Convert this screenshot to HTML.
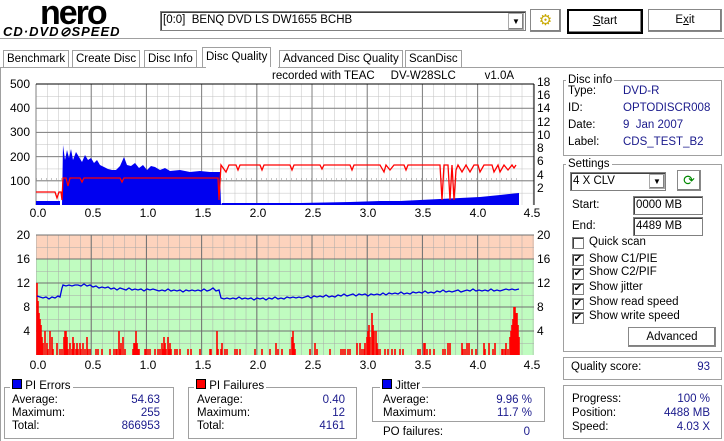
<!DOCTYPE html>
<html><head><meta charset="utf-8"><style>
body{margin:0;width:724px;height:441px;background:#fff;position:relative;overflow:hidden;font-family:"Liberation Sans","IPAGothic",sans-serif;font-size:11.5px;color:#000}
div,span{position:absolute;white-space:nowrap}
.box{border:1px solid #a0a0a0;box-shadow:1px 1px 0 #fff inset,1px 1px 0 #fff}
.lg{background:#fff;padding:0 2px;line-height:12px}
.v{color:#1a1a8c}
.r{text-align:right}
.btn{border:1px solid #000;background:#fff;box-shadow:inset -1px -1px 0 #808080,inset 1px 1px 0 #fff;text-align:center}
.cb{width:10px;height:10px;border:1px solid #808080;box-shadow:inset 1px 1px 0 #404040;background:#fff;font-size:10px;line-height:10px;text-align:center}
.tab{border:1px solid #a0a0a0;border-bottom:none;top:50px;height:17px;line-height:17px;padding:0 3px;background:#fff}
.inp{border:1px solid #808080;box-shadow:inset 1px 1px 0 #404040;background:#fff;line-height:17px;padding-left:2px}
</style></head><body>
<div style="left:40px;top:-6px;font:bold 34px 'Liberation Sans',sans-serif;letter-spacing:-2px">nero</div>
<div style="left:3px;top:24px;font:bold italic 13px 'Liberation Sans',sans-serif;letter-spacing:1px">CD·DVD<span style="position:static">⊘</span>SPEED</div>
<div class="inp" style="left:160px;top:11px;width:362px;height:18px">[0:0]&nbsp; BENQ DVD LS DW1655 BCHB</div>
<div class="btn" style="left:508px;top:13px;width:14px;height:15px;border-color:#aaa;font-size:8px;line-height:15px">▼</div>
<div class="btn" style="left:530px;top:9px;width:29px;height:21px;border-color:#888;color:#c8a800;font-size:15px;line-height:21px">⚙</div>
<div class="btn" style="left:567px;top:9px;width:72px;height:21px;border-width:2px;line-height:21px"><u>S</u>tart</div>
<div class="btn" style="left:648px;top:9px;width:72px;height:21px;border-color:#888;line-height:21px">E<u>x</u>it</div>
<div style="left:0;top:38px;width:724px;height:1px;background:#a0a0a0"></div>
<div class="tab" style="left:3px">Benchmark</div>
<div class="tab" style="left:72px">Create Disc</div>
<div class="tab" style="left:144px">Disc Info</div>
<div class="tab" style="left:202px;top:47px;height:20px;line-height:18px">Disc Quality</div>
<div class="tab" style="left:279px">Advanced Disc Quality</div>
<div class="tab" style="left:405px">ScanDisc</div>
<div style="left:0;top:67px;width:724px;height:1px;background:#a0a0a0"></div>
<div style="left:206px;top:67px;width:72px;height:1px;background:#fff"></div>
<div style="left:0;top:67px;width:1px;height:374px;background:#a0a0a0"></div>
<div style="left:272px;top:70px">recorded with TEAC&nbsp;&nbsp;&nbsp;&nbsp; DV-W28SLC&nbsp;&nbsp;&nbsp;&nbsp;&nbsp;&nbsp;&nbsp;&nbsp; v1.0A</div>

<svg style="position:absolute;left:0;top:0" width="724" height="441" font-family="Liberation Sans,sans-serif" font-size="12">
<defs>
<pattern id="g1" x="36" y="84" width="11.04" height="12.1" patternUnits="userSpaceOnUse"><path d="M0,0V12.1M0,0H11.04" stroke="#c0c0c0" stroke-width="1" fill="none"/></pattern>
<pattern id="g2" x="36" y="235" width="11.04" height="12" patternUnits="userSpaceOnUse"><path d="M0,0V12M0,0H11.04" stroke="#a8a8a8" stroke-width="1" fill="none"/></pattern>
</defs>
<rect x="36" y="84" width="498" height="121" fill="#fff"/>
<rect x="36" y="84" width="498" height="121" fill="url(#g1)"/>
<g stroke="#808080"><path d="M36,84V205M91.2,84V205M146.4,84V205M201.6,84V205M256.8,84V205M312,84V205M367.2,84V205M422.4,84V205M477.6,84V205M36,108.2H534M36,132.4H534M36,156.6H534M36,180.8H534"/></g>
<path d="M36,84H534M534,84V205" stroke="#000" fill="none"/>
<path d="M36,179H520" stroke="#888" stroke-dasharray="1,4"/>
<path fill="#0000f0" d="M36,205V201H60V205H62L63,145L65,160L67,150L69,158L71,149L73,160L76,152L79,157L82,162L85,155L88,160L91,158L94,163L97,160L100,165L104,167L108,169L112,170L116,170L120,166L124,157L127,165L131,166L135,163L139,168L143,165L147,170L151,166L155,167L160,170L165,168L170,171L180,170L190,172L200,171L210,172L220,172L221,205L222,203L300,203L350,202L380,201L400,201L420,200L440,199L460,198L480,197L500,195L519,193V205Z"/>
<path fill="none" stroke="#f00" stroke-width="1.3" d="M36,192H55L57,198L59,192H61L62,200L63,178L66,178L68,186L70,178L80,178L82,182L84,178L120,178L122,182L124,178L218,178L219,200L221,165L226,172L229,165L236,165L238,170L240,165L260,165L262,170L264,165L290,165L292,170L294,165L320,165L322,169L324,165L350,165L352,170L354,165L380,165L384,172L386,165L390,170L394,165L404,165L406,170L408,165L440,165L442,200L444,165L448,165L450,200L452,165L454,200L456,170L458,165L462,172L466,165L470,172L474,165L478,165L480,172L484,165L492,165L494,172L498,165L500,172L504,165L508,170L512,165L514,168L516,165"/>
<g text-anchor="end"><text x="30" y="88">500</text><text x="30" y="112">400</text><text x="30" y="136">300</text><text x="30" y="161">200</text><text x="30" y="185">100</text></g>
<g text-anchor="start"><text x="537" y="86">18</text><text x="537" y="99">16</text><text x="537" y="112">14</text><text x="537" y="126">12</text><text x="537" y="139">10</text><text x="537" y="152">8</text><text x="537" y="165">6</text><text x="537" y="179">4</text><text x="537" y="192">2</text></g>
<g text-anchor="middle"><text x="38" y="217">0.0</text><text x="93" y="217">0.5</text><text x="148" y="217">1.0</text><text x="203" y="217">1.5</text><text x="258" y="217">2.0</text><text x="313" y="217">2.5</text><text x="368" y="217">3.0</text><text x="423" y="217">3.5</text><text x="478" y="217">4.0</text><text x="532" y="217">4.5</text></g>
<rect x="36" y="235" width="498" height="24" fill="#fdd3bd"/>
<rect x="36" y="259" width="498" height="96" fill="#c0fcc0"/>
<rect x="36" y="235" width="498" height="120" fill="url(#g2)"/>
<g stroke="#707070"><path d="M91.2,235V355M146.4,235V355M201.6,235V355M256.8,235V355M312,235V355M367.2,235V355M422.4,235V355M477.6,235V355M36,235H534M36,259H534M36,283H534M36,307H534M36,331H534"/></g>
<path fill="none" stroke="#f00" stroke-width="1.6" d="M37,355V283M38,355V301M39,355V313M40,355V319M41,355V325M42,355V337M43,355V343M45,355V331M47,355V343M48,355V349M50,355V331M52,355V337M53,355V349M57,355V343M60,355V349M62,355V349M64,355V337M65,355V331M66,355V331M67,355V337M68,355V349M70,355V343M72,355V349M73,355V337M74,355V343M76,355V349M77,355V343M78,355V349M80,355V343M81,355V349M83,355V343M85,355V349M87,355V337M88,355V349M90,355V349M96,355V349M98,355V349M102,355V349M110,355V349M114,355V349M116,355V349M117,355V349M119,355V331M120,355V349M121,355V343M123,355V337M125,355V349M133,355V349M134,355V343M135,355V343M136,355V331M137,355V343M138,355V349M139,355V349M145,355V349M146,355V349M148,355V349M150,355V349M155,355V349M158,355V349M160,355V349M162,355V343M163,355V349M164,355V337M165,355V343M166,355V349M168,355V337M169,355V349M170,355V343M171,355V349M175,355V349M177,355V349M180,355V349M188,355V349M191,355V349M200,355V349M210,355V349M211,355V349M217,355V331M218,355V349M221,355V349M222,355V343M225,355V349M227,355V349M235,355V349M237,355V349M240,355V349M255,355V349M262,355V349M270,355V349M276,355V343M278,355V349M282,355V349M290,355V349M292,355V337M293,355V331M294,355V343M295,355V349M310,355V349M315,355V343M317,355V349M330,355V349M341,355V349M343,355V349M345,355V349M348,355V349M350,355V349M357,355V343M360,355V343M362,355V349M364,355V349M365,355V343M367,355V337M368,355V331M369,355V325M370,355V337M372,355V313M373,355V325M374,355V331M376,355V331M377,355V343M378,355V349M380,355V349M385,355V349M388,355V349M392,355V349M395,355V349M400,355V349M403,355V349M418,355V349M420,355V349M424,355V343M425,355V343M427,355V349M430,355V349M434,355V349M443,355V349M445,355V349M448,355V343M450,355V343M462,355V343M463,355V349M465,355V349M467,355V343M469,355V343M472,355V349M476,355V349M484,355V343M485,355V349M489,355V343M493,355V349M495,355V343M502,355V349M503,355V349M505,355V349M506,355V343M508,355V349M510,355V337M511,355V331M512,355V325M513,355V319M514,355V307M515,355V307M516,355V313M517,355V313M518,355V325M519,355V337"/>
<path fill="none" stroke="#0000e0" stroke-width="1.3" d="M37,296L40,297L43,298L46,297L49,299L52,297L55,298L58,296L60,297L62,288L63,285L66,286L69,285L72,286L75,285L78,285L81,286L84,284L87,286L90,285L93,287L96,286L99,288L102,287L105,288L108,287L111,289L114,288L117,290L120,288L123,289L126,290L129,288L132,290L135,289L138,290L141,289L144,291L147,289L150,290L153,289L156,290L159,291L162,290L165,291L168,289L171,291L174,290L177,291L180,290L183,292L186,290L189,291L192,290L195,291L198,290L201,291L204,289L207,291L210,290L213,288L216,291L219,290L221,298L224,299L227,298L230,299L233,298L236,299L239,297L242,299L245,298L248,299L251,298L254,300L257,298L260,299L263,298L266,300L269,298L272,299L275,297L278,299L281,298L284,299L287,297L290,298L293,297L296,298L299,297L302,298L305,297L308,296L311,298L314,296L317,297L320,296L323,297L326,295L329,297L332,296L335,297L338,295L341,296L344,294L347,296L350,295L353,294L356,296L359,294L362,295L365,294L368,296L371,294L374,295L377,294L380,295L383,293L386,295L389,293L392,294L395,293L398,294L401,292L404,294L407,293L410,294L413,292L416,293L419,292L422,293L425,291L428,293L431,292L434,293L437,291L440,292L443,290L446,292L449,291L452,292L455,291L458,290L461,292L464,291L467,290L470,291L473,289L476,291L479,290L482,291L485,290L488,291L491,289L494,291L497,290L500,291L503,290L506,289L509,290L512,289L515,290L519,289"/>
<g text-anchor="end"><text x="30" y="239">20</text><text x="30" y="263">16</text><text x="30" y="287">12</text><text x="30" y="311">8</text><text x="30" y="335">4</text></g>
<g><text x="537" y="239">20</text><text x="537" y="263">16</text><text x="537" y="287">12</text><text x="537" y="311">8</text><text x="537" y="335">4</text></g>
<g text-anchor="middle"><text x="38" y="369">0.0</text><text x="93" y="369">0.5</text><text x="148" y="369">1.0</text><text x="203" y="369">1.5</text><text x="258" y="369">2.0</text><text x="313" y="369">2.5</text><text x="368" y="369">3.0</text><text x="423" y="369">3.5</text><text x="478" y="369">4.0</text><text x="532" y="369">4.5</text></g>
</svg>

<div class="box" style="left:563px;top:80px;width:157px;height:74px"></div>
<div class="lg" style="left:566px;top:74px">Disc info</div>
<div style="left:568px;top:85px">Type:</div><div class="v" style="left:623px;top:85px">DVD-R</div>
<div style="left:568px;top:102px">ID:</div><div class="v" style="left:623px;top:102px">OPTODISCR008</div>
<div style="left:568px;top:119px">Date:</div><div class="v" style="left:623px;top:119px">9&nbsp; Jan 2007</div>
<div style="left:568px;top:136px">Label:</div><div class="v" style="left:623px;top:136px">CDS_TEST_B2</div>
<div class="box" style="left:563px;top:164px;width:157px;height:186px"></div>
<div class="lg" style="left:566px;top:158px">Settings</div>
<div class="inp" style="left:570px;top:172px;width:92px;height:17px">4 X CLV</div>
<div class="btn" style="left:649px;top:174px;width:14px;height:13px;border-color:#aaa;font-size:8px;line-height:13px">▼</div>
<div class="btn" style="left:677px;top:170px;width:22px;height:19px;border-color:#888;color:#080;font-size:14px;line-height:19px">⟳</div>
<div style="left:572px;top:199px">Start:</div><div class="inp" style="left:633px;top:196px;width:66px;height:17px">0000 MB</div>
<div style="left:572px;top:220px">End:</div><div class="inp" style="left:633px;top:217px;width:66px;height:17px">4489 MB</div>
<div class="cb" style="left:572px;top:237px"></div><div style="left:589px;top:236px">Quick scan</div>
<div class="cb" style="left:572px;top:254px">✔</div><div style="left:589px;top:253px">Show C1/PIE</div>
<div class="cb" style="left:572px;top:268px">✔</div><div style="left:589px;top:266px">Show C2/PIF</div>
<div class="cb" style="left:572px;top:283px">✔</div><div style="left:589px;top:281px">Show jitter</div>
<div class="cb" style="left:572px;top:298px">✔</div><div style="left:589px;top:296px">Show read speed</div>
<div class="cb" style="left:572px;top:312px">✔</div><div style="left:589px;top:310px">Show write speed</div>
<div class="btn" style="left:628px;top:327px;width:86px;height:18px;border-color:#888;line-height:18px">Advanced</div>
<div class="box" style="left:563px;top:357px;width:157px;height:21px"></div>
<div style="left:571px;top:361px">Quality score:</div><div class="v r" style="left:650px;top:361px;width:60px">93</div>
<div class="box" style="left:563px;top:385px;width:157px;height:52px"></div>
<div style="left:572px;top:393px">Progress:</div><div class="v r" style="left:630px;top:393px;width:80px">100 %</div>
<div style="left:572px;top:407px">Position:</div><div class="v r" style="left:630px;top:407px;width:80px">4488 MB</div>
<div style="left:572px;top:421px">Speed:</div><div class="v r" style="left:630px;top:421px;width:80px">4.03 X</div>
<div class="box" style="left:4px;top:387px;width:168px;height:50px"></div>
<div class="lg" style="left:10px;top:379px"><span style="position:static;display:inline-block;width:8px;height:8px;background:#0000f0;border:1px solid #000"></span> PI Errors</div>
<div style="left:12px;top:394px">Average:</div><div class="v r" style="left:100px;top:394px;width:60px">54.63</div>
<div style="left:12px;top:407px">Maximum:</div><div class="v r" style="left:100px;top:407px;width:60px">255</div>
<div style="left:12px;top:420px">Total:</div><div class="v r" style="left:100px;top:420px;width:60px">866953</div>
<div class="box" style="left:188px;top:387px;width:167px;height:50px"></div>
<div class="lg" style="left:194px;top:379px"><span style="position:static;display:inline-block;width:8px;height:8px;background:#f00;border:1px solid #000"></span> PI Failures</div>
<div style="left:197px;top:394px">Average:</div><div class="v r" style="left:285px;top:394px;width:60px">0.40</div>
<div style="left:197px;top:407px">Maximum:</div><div class="v r" style="left:285px;top:407px;width:60px">12</div>
<div style="left:197px;top:420px">Total:</div><div class="v r" style="left:285px;top:420px;width:60px">4161</div>
<div class="box" style="left:372px;top:387px;width:171px;height:33px"></div>
<div class="lg" style="left:380px;top:379px"><span style="position:static;display:inline-block;width:8px;height:8px;background:#0000f0;border:1px solid #000"></span> Jitter</div>
<div style="left:383px;top:394px">Average:</div><div class="v r" style="left:470px;top:394px;width:62px">9.96 %</div>
<div style="left:383px;top:407px">Maximum:</div><div class="v r" style="left:470px;top:407px;width:62px">11.7 %</div>
<div style="left:383px;top:426px">PO failures:</div><div class="v r" style="left:470px;top:426px;width:60px">0</div>
</body></html>
